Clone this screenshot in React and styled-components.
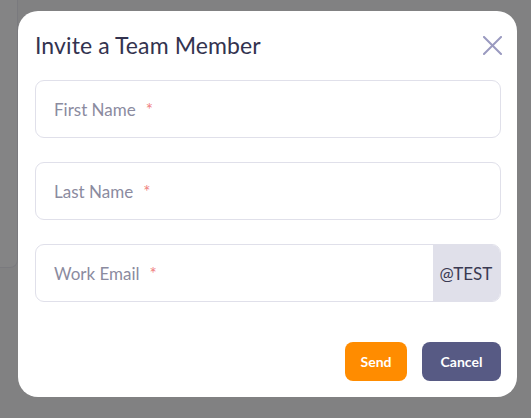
import React from "react";
import styled, { createGlobalStyle } from "styled-components";

const Global = createGlobalStyle`
  html, body { margin: 0; padding: 0; }
  body { font-family: Lato, "Open Sans", sans-serif; background: #fff; }
  * { box-sizing: border-box; }
`;

const Page = styled.div`
  width: 531px;
  height: 418px;
  position: relative;
  overflow: hidden;
  background: #f4f4f6;
`;

const BackCard = styled.div`
  width: 18px;
  height: 268px;
  background: #f9f9fb;
  border-right: 1px solid #e6e6ee;
  border-bottom: 1px solid #e6e6ee;
  border-bottom-right-radius: 8px;
`;

const Overlay = styled.div`
  position: absolute;
  inset: 0;
  background: rgba(0, 0, 0, 0.47);
  padding: 11px 14px 0 18px;
`;

const Modal = styled.div`
  width: 499px;
  height: 386px;
  background: #fff;
  border-radius: 20px;
  padding: 18px 16px 0 17px;
  display: flex;
  flex-direction: column;
`;

const Header = styled.div`
  display: flex;
  align-items: center;
  justify-content: space-between;
  height: 32px;
  margin-bottom: 19px;
`;

const Title = styled.h2`
  margin: 0;
  font-family: Lato, sans-serif;
  font-weight: 400;
  font-size: 23px;
  color: #33334f;
  letter-spacing: 0.1px;
`;

const Close = styled.button`
  border: 0;
  background: none;
  padding: 0;
  width: 20px;
  height: 20px;
  display: flex;
  align-items: center;
  justify-content: center;
  margin-right: -1px;
  cursor: pointer;
`;

const Fields = styled.div`
  display: flex;
  flex-direction: column;
  gap: 24px;
`;

const Field = styled.div`
  height: 58px;
  border: 1px solid #e0e0ea;
  border-radius: 9px;
  display: flex;
  align-items: stretch;
  overflow: hidden;
`;

const Placeholder = styled.div`
  flex: 1;
  display: flex;
  align-items: center;
  padding-left: 18px;
  font-size: 17px;
  color: #8b8b9f;
`;

const Star = styled.span`
  color: #ef8080;
  margin-left: 10px;
  font-size: 17px;
`;

const Addon = styled.div`
  width: 67px;
  background: #e0e0ea;
  display: flex;
  align-items: center;
  justify-content: center;
  font-size: 17px;
  color: #3a3a52;
  padding-right: 1px;
`;

const Footer = styled.div`
  margin-top: 40px;
  display: flex;
  justify-content: flex-end;
  gap: 15px;
`;

const Btn = styled.button`
  height: 39px;
  min-width: ${(p) => p.$w}px;
  border: 0;
  border-radius: 8px;
  background: ${(p) => p.$bg};
  color: #fff;
  font-family: Lato, sans-serif;
  font-weight: 700;
  font-size: 14px;
  padding: 0;
  cursor: pointer;
`;

const Input = ({ label, addon }) => (
  <Field>
    <Placeholder>
      {label}
      <Star>*</Star>
    </Placeholder>
    {addon && <Addon>{addon}</Addon>}
  </Field>
);

export default function App() {
  return (
    <>
      <Global />
      <Page>
        <BackCard />
        <Overlay>
          <Modal>
            <Header>
              <Title>Invite a Team Member</Title>
              <Close aria-label="close">
                <svg width="19" height="19" viewBox="0 0 19 19">
                  <path d="M1 1 L18 18 M18 1 L1 18" stroke="#9a9ac0" strokeWidth="2" strokeLinecap="square" fill="none" />
                </svg>
              </Close>
            </Header>
            <Fields>
              <Input label="First Name" />
              <Input label="Last Name" />
              <Input label="Work Email" addon="@TEST" />
            </Fields>
            <Footer>
              <Btn $bg="#ff8c00" $w={62}>Send</Btn>
              <Btn $bg="#575a84" $w={79}>Cancel</Btn>
            </Footer>
          </Modal>
        </Overlay>
      </Page>
    </>
  );
}
